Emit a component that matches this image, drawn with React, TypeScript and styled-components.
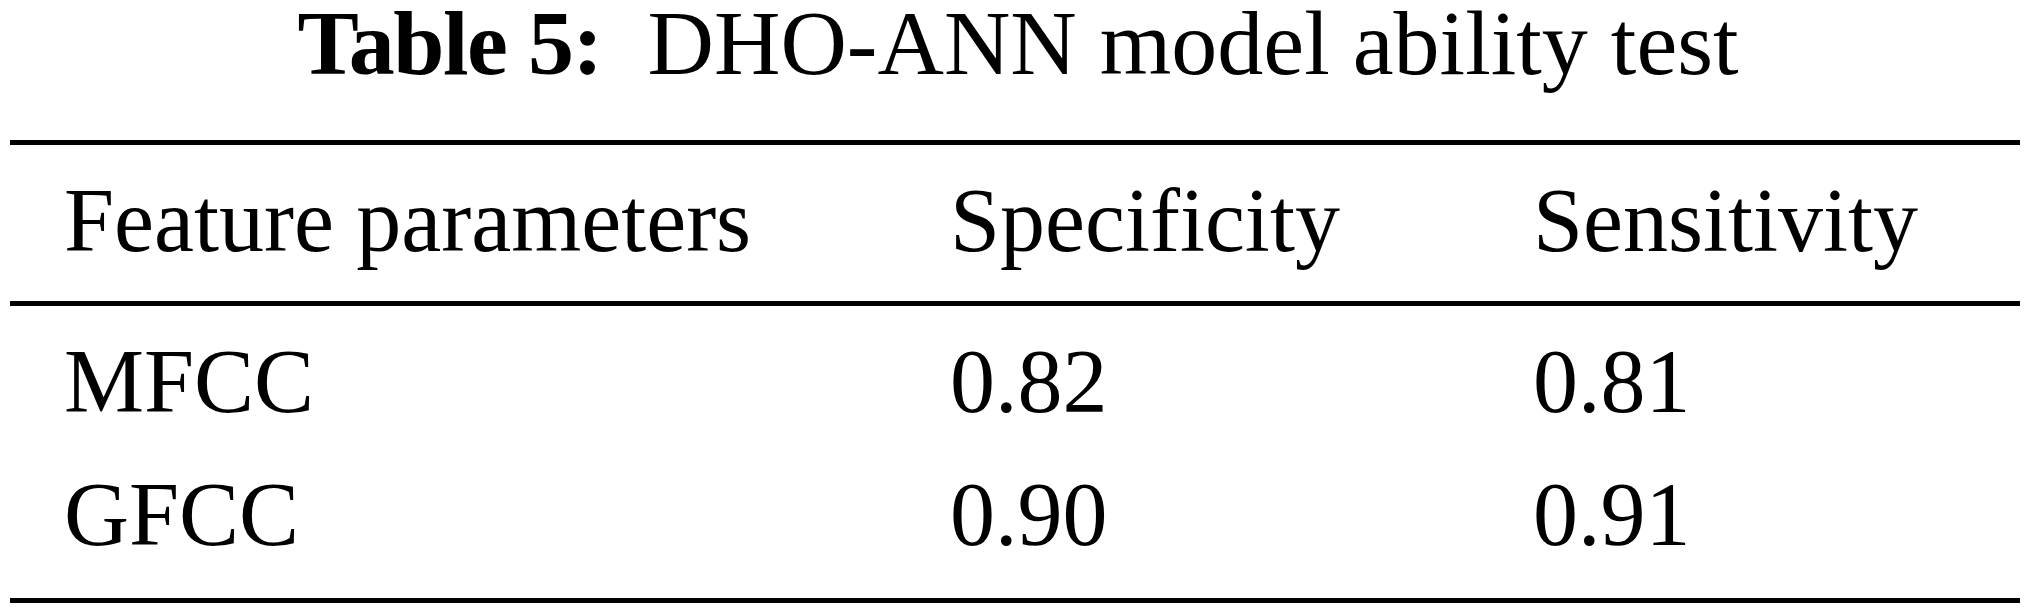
import React from 'react'
import styled, { createGlobalStyle } from 'styled-components'

const GlobalStyle = createGlobalStyle`
  html, body {
    margin: 0;
    padding: 0;
    background: #ffffff;
  }
  body {
    width: 2030px;
    font-family: "Liberation Serif", "Times New Roman", serif;
    color: #000000;
  }
`

const Page = styled.div`
  padding: 3px 10px 0 10px;
  display: flex;
  flex-direction: column;
`

const Caption = styled.div`
  font-size: 92px;
  line-height: 80px;
  text-align: center;
  white-space: pre;
  margin-bottom: 57px;
  padding-left: 6px;
`

const CaptionLabel = styled.span`
  font-weight: bold;
  letter-spacing: -1.5px;
  margin-right: 46px;
`

const Rule = styled.div`
  height: 5px;
  background: #000000;
`

const Row = styled.div<{ $top: number; $bottom: number }>`
  display: grid;
  grid-template-columns: 886px 583px 1fr;
  padding-top: ${({ $top }) => $top}px;
  padding-bottom: ${({ $bottom }) => $bottom}px;
`

const Cell = styled.div`
  padding-left: 54px;
  font-size: 90px;
  line-height: 90px;
  white-space: nowrap;
`

const header = ['Feature parameters', 'Specificity', 'Sensitivity']

const rows = [
  ['MFCC', '0.82', '0.81'],
  ['GFCC', '0.90', '0.91'],
]

export default function App() {
  return (
    <>
      <GlobalStyle />
      <Page>
        <Caption>
          <CaptionLabel>Table 5:</CaptionLabel>DHO-ANN model ability test
        </Caption>
        <Rule />
        <Row $top={31} $bottom={35}>
          {header.map((h) => (
            <Cell key={h}>{h}</Cell>
          ))}
        </Row>
        <Rule />
        {rows.map((r, i) => (
          <Row key={r[0]} $top={i === 0 ? 31 : 0} $bottom={i === 0 ? 43 : 38}>
            {r.map((c, j) => (
              <Cell key={j}>{c}</Cell>
            ))}
          </Row>
        ))}
        <Rule />
      </Page>
    </>
  )
}
